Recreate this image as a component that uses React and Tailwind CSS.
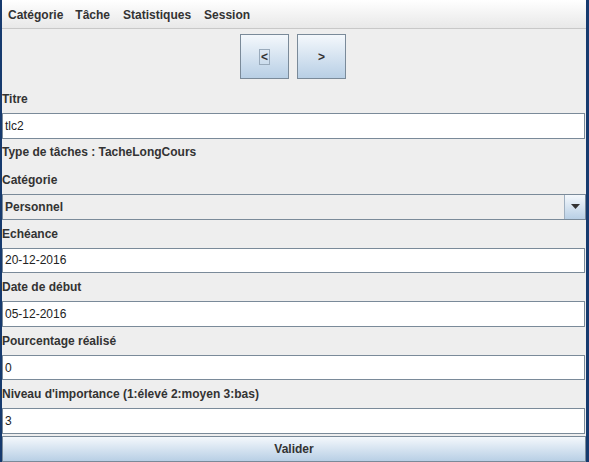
import React from 'react';

const Label = ({ children }) => (
    <div className="h-[28px] flex items-center text-[12px] font-bold text-[#333333]">{children}</div>
);

const Field = ({ value }) => (
    <div className="h-[26px] mr-[1px] bg-white border border-[#7a8a99] flex items-center pl-[2px] text-[12px] text-[#222222]">
        {value}
    </div>
);

const NavButton = ({ label, focused }) => (
    <button className="w-[49px] h-[45px] border border-[#7a8a99] bg-gradient-to-b from-[#f4f8fc] to-[#b8cfe5] flex items-center justify-center text-[12px] font-bold text-[#333333]">
        <span className={focused ? 'border border-[#99aabb] px-[1px] leading-[14px]' : 'leading-[14px]'}>{label}</span>
    </button>
);

export default function App() {
    return (
        <div className="w-[589px] h-[462px] overflow-hidden bg-[#eeeeee] border-l-2 border-r-[3px] border-[#163a6e] flex flex-col" style={{ fontFamily: '"Liberation Sans", Arial, sans-serif' }}>
            {/* Menu bar */}
            <div className="h-[29px] shrink-0 bg-gradient-to-b from-white to-[#e8e8e8] border-b border-[#c8c8c8] flex items-center pl-[6px] pt-[1px] text-[12px] font-bold text-[#333333]">
                <span className="mr-[12px]">Catégorie</span>
                <span className="mr-[13px]">Tâche</span>
                <span className="mr-[13px]">Statistiques</span>
                <span>Session</span>
            </div>

            {/* Navigation */}
            <div className="h-[56px] shrink-0 flex justify-center items-start pt-[5px] gap-[8px] pr-[2px]">
                <NavButton label="<" focused />
                <NavButton label=">" />
            </div>

            <Label>Titre</Label>
            <Field value="tlc2" />
            <Label>Type de tâches : TacheLongCours</Label>
            <Label>Catégorie</Label>
            <div className="h-[26px] border border-[#7a8a99] bg-[#eeeeee] flex items-stretch">
                <div className="flex-1 flex items-center pl-[2px] text-[12px] font-bold text-[#333333]">Personnel</div>
                <div className="w-[21px] border-l border-[#a0b0c0] bg-gradient-to-b from-[#f4f8fc] to-[#b8cfe5] flex items-center justify-center">
                    <svg width="9" height="5" viewBox="0 0 9 5"><path d="M0 0h9L4.5 5z" fill="#333333" /></svg>
                </div>
            </div>
            <Label>Echéance</Label>
            <Field value="20-12-2016" />
            <Label>Date de début</Label>
            <Field value="05-12-2016" />
            <Label>Pourcentage réalisé</Label>
            <Field value="0" />
            <Label>Niveau d'importance (1:élevé 2:moyen 3:bas)</Label>
            <Field value="3" />

            <button className="mt-[2px] h-[26px] shrink-0 border border-[#7a8a99] bg-gradient-to-b from-[#f4f8fc] to-[#b8cfe5] text-[12px] font-bold text-[#333333]">
                Valider
            </button>
        </div>
    );
}
